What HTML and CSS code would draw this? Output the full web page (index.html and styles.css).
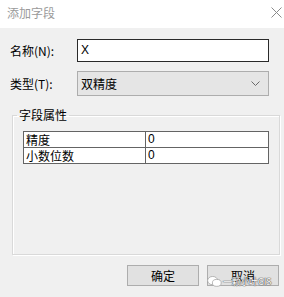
FILE: index.html
```html
<!DOCTYPE html>
<html lang="zh-CN">
<head>
    <meta charset="UTF-8">
    <title>添加字段</title>
    <link rel="stylesheet" href="styles.css">
</head>
<body>
    <div class="dialog">
        <div class="title-bar">
            <span class="title">添加字段</span>
            <svg class="close" width="11" height="11" viewBox="0 0 11 11">
                <path d="M0.5 0.5L10.5 10.5M10.5 0.5L0.5 10.5" stroke="#8a8a8a" stroke-width="1" fill="none"/>
            </svg>
        </div>
        <div class="content">
            <div class="form-row">
                <label class="label">名称(N):</label>
                <div class="text-input">X</div>
            </div>
            <div class="form-row row-type">
                <label class="label">类型(T):</label>
                <div class="combo">
                    <span>双精度</span>
                    <svg width="9" height="6" viewBox="0 0 9 6">
                        <path d="M0.5 0.5L4.5 4.5L8.5 0.5" stroke="#6a6a6a" stroke-width="1" fill="none"/>
                    </svg>
                </div>
            </div>
            <fieldset class="group">
                <legend>字段属性</legend>
                <div class="props">
                    <table class="grid">
                        <tr><td class="name">精度</td><td>0</td></tr>
                        <tr><td class="name">小数位数</td><td>0</td></tr>
                    </table>
                </div>
            </fieldset>
            <div class="buttons">
                <button class="btn">确定</button>
                <button class="btn">取消</button>
            </div>
        </div>
        <div class="watermark">
            <svg width="15" height="11" viewBox="0 0 16 12">
                <ellipse cx="6" cy="5" rx="5.5" ry="4.5" fill="#fff" stroke="#a0a0a0" stroke-width="0.8"/>
                <ellipse cx="10.5" cy="7.5" rx="4.8" ry="3.8" fill="#fff" stroke="#a0a0a0" stroke-width="0.8"/>
            </svg>
            <span>一颗小叶GIS</span>
        </div>
    </div>
</body>
</html>
```

FILE: styles.css
```css
body {
    margin: 0;
    font-family: "Noto Sans CJK SC", "Liberation Sans", sans-serif;
    font-size: 12px;
    color: #000;
    background: #f0f0f0;
}
.dialog {
    width: 284px;
    height: 297px;
    background: #f0f0f0;
    position: relative;
    overflow: hidden;
}
.title-bar {
    height: 28px;
    background: #fff;
    display: flex;
    align-items: center;
    justify-content: space-between;
    padding: 0 2px 0 7px;
}
.title {
    color: #9a9a9a;
    font-size: 12px;
    line-height: 14px;
    margin-top: -2px;
}
.close {
    margin-top: -3px;
}
.content {
    padding: 11px 4px 0 10px;
}
.form-row {
    display: flex;
    align-items: center;
}
.row-type {
    margin-top: 9px;
}
.label {
    width: 67px;
    font-size: 12px;
    line-height: 14px;
}
.text-input {
    box-sizing: border-box;
    width: 192px;
    height: 23px;
    border: 1px solid #2a2a2a;
    background: #fff;
    padding-left: 3px;
    font-family: "Liberation Sans", sans-serif;
    font-size: 12px;
    line-height: 21px;
}
.combo {
    box-sizing: border-box;
    width: 192px;
    height: 25px;
    border: 1px solid #adadad;
    background: #e5e5e5;
    padding: 0 8px 0 3px;
    display: flex;
    align-items: center;
    justify-content: space-between;
    font-size: 12px;
}
.group {
    margin: 12px 0 0 2px;
    padding: 9px 0 0 10px;
    border: 1px solid #d9d9d9;
    box-shadow: inset 1px 1px 0 #fff, 1px 1px 0 #fff;
}
.group legend {
    padding: 0 2px;
    margin-left: -6px;
    font-size: 12px;
    line-height: 14px;
}
.props {
    height: 123px;
}
.grid {
    border-collapse: collapse;
    width: 246px;
    background: #fff;
}
.grid td {
    border: 1px solid #646464;
    height: 15px;
    padding: 0 0 0 2px;
    font-size: 12px;
    line-height: 15px;
}
.grid td.name {
    width: 119px;
}
.grid td:last-child {
    font-family: "Liberation Sans", sans-serif;
}
.buttons {
    display: flex;
    justify-content: flex-end;
    gap: 8px;
    margin-top: 10px;
    padding-right: 1px;
}
.btn {
    width: 72px;
    height: 21px;
    border: 1px solid #adadad;
    background: #e1e1e1;
    font-family: "Noto Sans CJK SC", sans-serif;
    font-size: 12px;
    padding: 0;
    color: #000;
}
.watermark {
    position: absolute;
    left: 207px;
    top: 276px;
    display: flex;
    align-items: center;
    gap: 1px;
    font-size: 9px;
    line-height: 11px;
    letter-spacing: -0.3px;
    color: #fff;
    text-shadow: 0 0 1px #555, 0 0 1px #555, 0 0 1px #555;
}
```
